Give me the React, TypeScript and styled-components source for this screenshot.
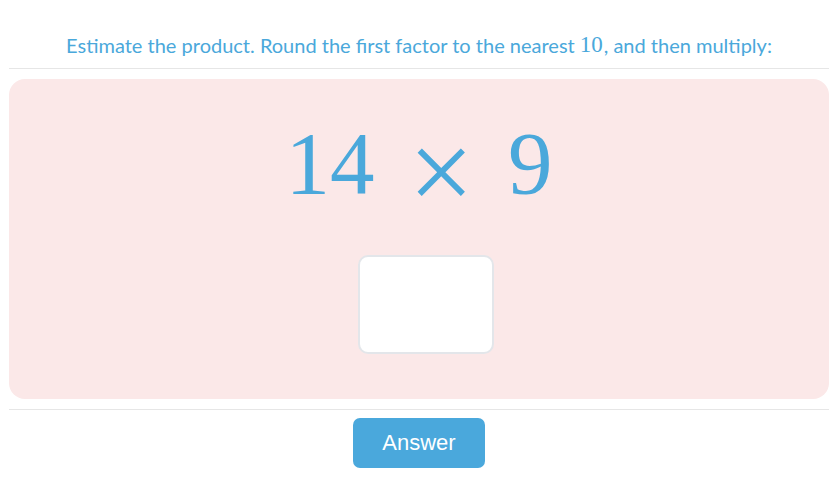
import React from 'react'
import styled, { createGlobalStyle } from 'styled-components'

const GlobalStyle = createGlobalStyle`
  html, body {
    margin: 0;
    padding: 0;
    background: #ffffff;
  }
`

const Page = styled.div`
  width: 840px;
  height: 501px;
  padding: 0 11px 0 9px;
  box-sizing: border-box;
  display: flex;
  flex-direction: column;
`

const Prompt = styled.div`
  height: 69px;
  display: flex;
  align-items: center;
  justify-content: center;
  padding-top: 21px;
  box-sizing: border-box;
  border-bottom: 1px solid #e6e6e6;
  color: #4aa8db;
  font-family: Lato, sans-serif;
  font-size: 20px;
`

const MathNum = styled.span`
  font-family: 'Liberation Serif', serif;
  font-size: 23px;
  margin: 0 1px 0 5px;
`

const Card = styled.div`
  margin-top: 10px;
  height: 320px;
  background: #fbe8e8;
  border-radius: 16px;
  display: flex;
  flex-direction: column;
  align-items: center;
`

const Expression = styled.div`
  margin-top: 39px;
  display: flex;
  align-items: flex-start;
  gap: 34px;
  color: #4aa8db;
  font-family: 'Liberation Serif', serif;
  font-size: 89px;
  line-height: 90px;
`

const Times = styled.span`
  font-size: 116px;
  line-height: 90px;
  padding-top: 9px;
`

const AnswerBox = styled.div`
  margin-top: 38px;
  margin-left: 14px;
  width: 132px;
  height: 95px;
  background: #ffffff;
  border: 2px solid #e3e6ea;
  border-radius: 10px;
`

const Footer = styled.div`
  margin-top: 10px;
  border-top: 1px solid #e6e6e6;
  display: flex;
  justify-content: center;
  padding-top: 8px;
`

const AnswerButton = styled.button`
  width: 132px;
  height: 50px;
  border: none;
  border-radius: 7px;
  background: #4aa8dc;
  color: #ffffff;
  font-family: 'Liberation Sans', Arial, sans-serif;
  font-size: 22px;
  cursor: pointer;
`

export default function App() {
  return (
    <>
      <GlobalStyle />
      <Page>
        <Prompt>
          Estimate the product. Round the first factor to the nearest<MathNum>10</MathNum>, and then multiply:
        </Prompt>
        <Card>
          <Expression>
            <span>14</span>
            <Times>×</Times>
            <span>9</span>
          </Expression>
          <AnswerBox />
        </Card>
        <Footer>
          <AnswerButton>Answer</AnswerButton>
        </Footer>
      </Page>
    </>
  )
}
